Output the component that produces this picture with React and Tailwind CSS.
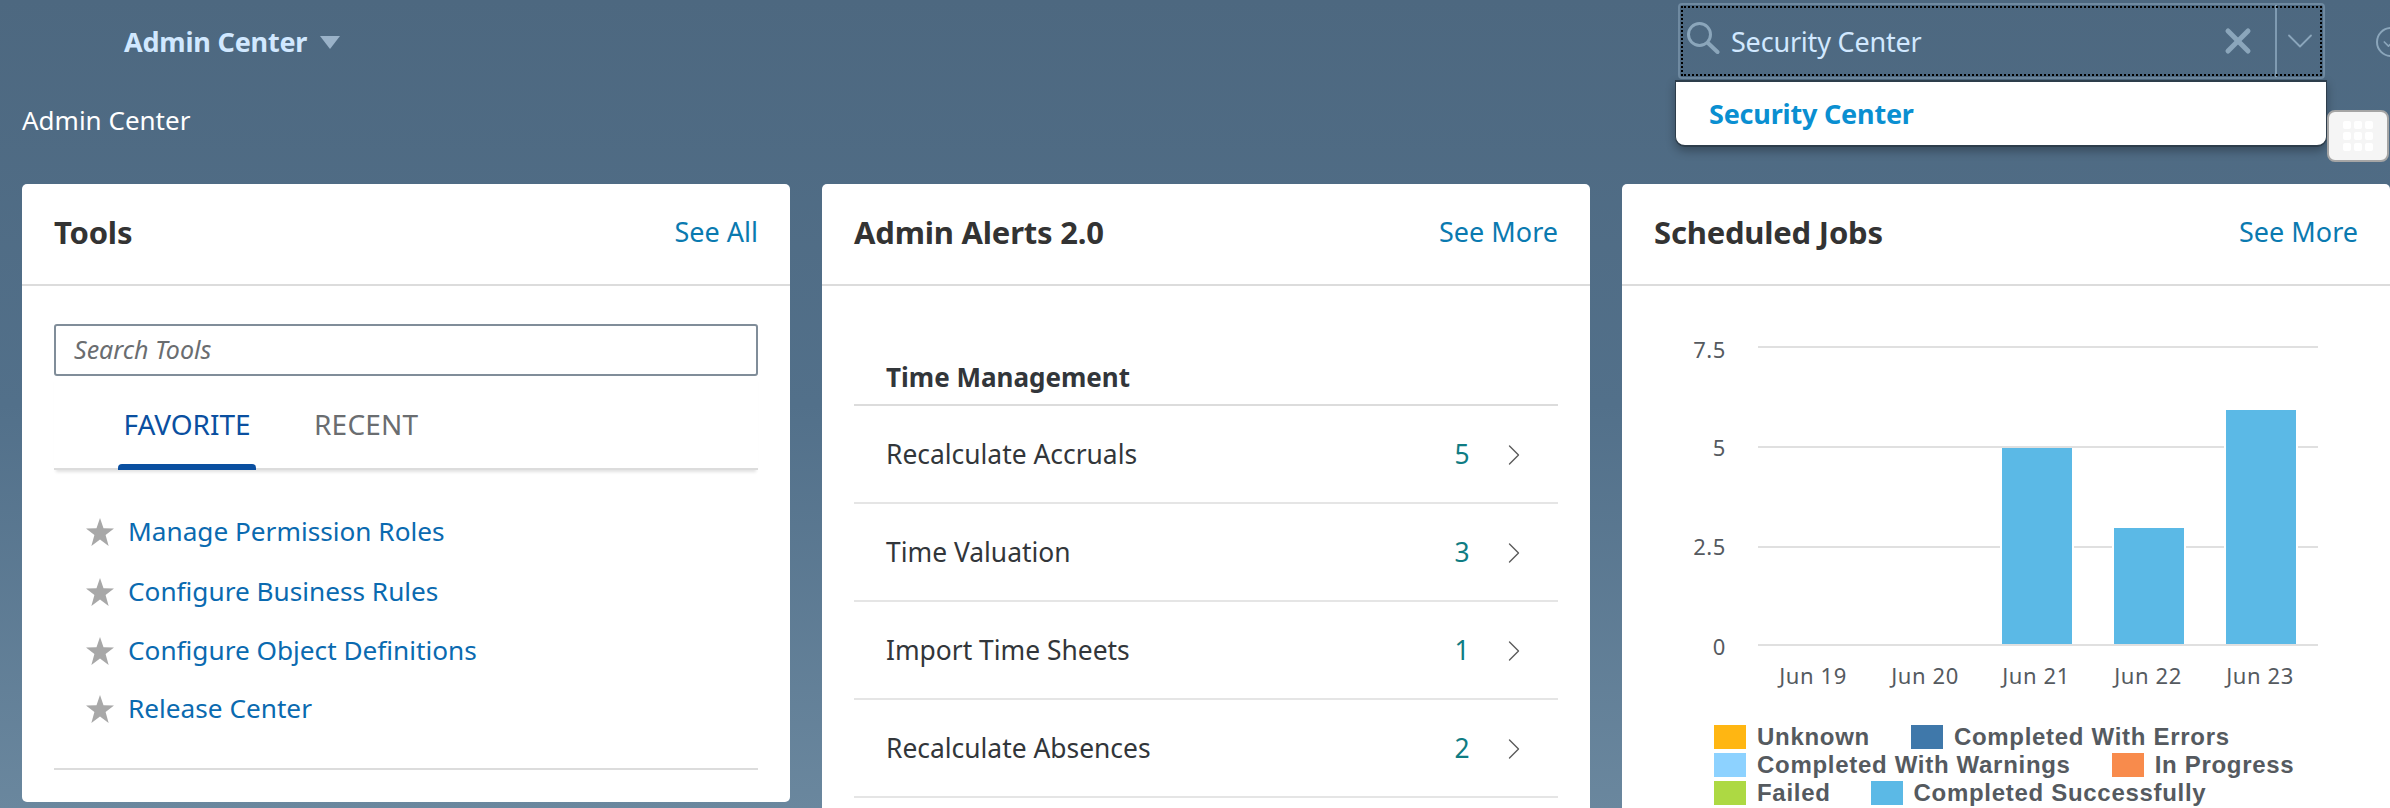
import { ChevronDown, ChevronRight, X, Check } from 'lucide-react'

const FAVORITES = ['Manage Permission Roles', 'Configure Business Rules', 'Configure Object Definitions', 'Release Center']

const ALERTS = [
  { label: 'Recalculate Accruals', count: 5 },
  { label: 'Time Valuation', count: 3 },
  { label: 'Import Time Sheets', count: 1 },
  { label: 'Recalculate Absences', count: 2 },
]

const LEGEND = [
  [
    { label: 'Unknown', color: 'bg-[#ffb612]' },
    { label: 'Completed With Errors', color: 'bg-[#3f78aa]', gap: 'ml-[41px]' },
  ],
  [
    { label: 'Completed With Warnings', color: 'bg-[#8dd2ff]' },
    { label: 'In Progress', color: 'bg-[#f88b4c]', gap: 'ml-[41px]' },
  ],
  [
    { label: 'Failed', color: 'bg-[#add943]' },
    { label: 'Completed Successfully', color: 'bg-[#5bb9e6]', gap: 'ml-[40px]' },
  ],
]

const FONT = "font-['Noto_Sans',sans-serif]"

function Card({ title, link, className = '', children }) {
  return (
    <section className={`w-[768px] shrink-0 bg-white rounded-[5px] ${className}`}>
      <header className="h-[102px] pb-[4px] flex items-center justify-between px-[32px] border-b-2 border-[#dcdcdc]">
        <h2 className="text-[31px] font-bold text-[#333333] tracking-[-0.2px]">{title}</h2>
        <a className="text-[27px] text-[#0a7ab0]">{link}</a>
      </header>
      {children}
    </section>
  )
}

function Star() {
  return (
    <svg width="28" height="28" viewBox="0 0 24 24" className="shrink-0" fill="#a8a8a8">
      <path d="M12 0l3 8.8 9 .2-7.2 5.6L19.4 24 12 18.5 4.6 24l2.6-9.4L0 9l9-.2z" />
    </svg>
  )
}

function ToolsCard() {
  return (
    <Card title="Tools" link="See All" className="h-[618px]">
      <div className="px-[32px] pt-[38px]">
        <div className="h-[52px] flex items-center border-2 border-[#808d99] rounded-[3px] pl-[18px] text-[25px] italic text-[#6a6d70]">
          Search Tools
        </div>
        <div className="h-[94px] flex items-end border-b-2 border-[#dcdcdc] shadow-[0_4px_3px_-2px_rgba(0,0,0,0.12)] pl-[64px] gap-[58px]">
          <div className="relative h-[94px] pt-[6px] w-[138px] flex items-center justify-center text-[28px] text-[#0a4fa0]">
            FAVORITE
            <span className="absolute left-0 right-0 bottom-[-2px] h-[6px] bg-[#0a4fa0] rounded-t-[4px]"></span>
          </div>
          <div className="h-[94px] pt-[6px] flex items-center text-[28px] text-[#6a6d70] tracking-[0.2px]">RECENT</div>
        </div>
        <ul className="pt-[32px] h-[300px] border-b-2 border-[#dcdcdc]">
          {FAVORITES.map((name, i) => (
            <li key={name} className={`flex items-center pl-[32px] gap-[14px] ${i < 2 ? 'h-[60px]' : 'h-[58px]'}`}>
              <Star />
              <a className="text-[26.2px] text-[#0a6ab0]">{name}</a>
            </li>
          ))}
        </ul>
      </div>
    </Card>
  )
}

function AlertsCard() {
  return (
    <Card title="Admin Alerts 2.0" link="See More" className="h-[640px]">
      <div className="px-[32px] pt-[60px]">
        <h3 className="h-[60px] pt-[4px] flex items-center pl-[32px] border-b-2 border-[#dcdcdc] text-[26px] font-bold text-[#32363a]">
          Time Management
        </h3>
        {ALERTS.map((a) => (
          <div key={a.label} className="h-[98px] pt-[2px] flex items-center border-b-2 border-[#e5e5e5] pl-[32px] text-[26.4px] text-[#32363a]">
            <span className="flex-1">{a.label}</span>
            <span className="w-[24px] text-center text-[#0f7c83] mr-[22px]">{a.count}</span>
            <ChevronRight size={36} strokeWidth={0.9} className="text-[#5a5a5a] mr-[26px]" />
          </div>
        ))}
      </div>
    </Card>
  )
}

function JobsChart() {
  const lines = [[347, 358, '7.5'], [447, 456, '5'], [547, 555, '2.5'], [645, 655, '0']]
  const bars = [[2002, 448], [2114, 528], [2226, 410]]
  const days = [[1813, 'Jun 19'], [1925, 'Jun 20'], [2036, 'Jun 21'], [2148, 'Jun 22'], [2260, 'Jun 23']]
  return (
    <svg width="768" height="410" viewBox="1622 286 768 410" className="block" style={{ fontFamily: "'Noto Sans', sans-serif" }}>
      {lines.map(([y]) => (
        <rect key={y} x="1758" y={y - 1} width="560" height="2" fill="#e0e0e0" />
      ))}
      {bars.map(([x, top]) => (
        <g key={x}>
          <rect x={x - 2} y={top} width="74" height={644 - top} fill="#fff" />
          <rect x={x} y={top} width="70" height={644 - top} fill="#5bb9e6" />
        </g>
      ))}
      {lines.map(([y, base, t]) => (
        <text key={t} x="1726" y={base} textAnchor="end" fontSize="22" fill="#555a5f" letterSpacing="0.6">{t}</text>
      ))}
      {days.map(([x, t]) => (
        <text key={t} x={x} y="684" textAnchor="middle" fontSize="22" fill="#555a5f" letterSpacing="0.6">{t}</text>
      ))}
    </svg>
  )
}

function JobsCard() {
  return (
    <Card title="Scheduled Jobs" link="See More" className="h-[640px]">
      <JobsChart />
      <div className="pl-[92px] pt-[27px] flex flex-col">
        {LEGEND.map((row, i) => (
          <div key={i} className="h-[28px] flex items-center">
            {row.map((item) => (
              <div key={item.label} className={`flex items-center ${item.gap ?? ''}`}>
                <span className={`w-[32px] h-[24px] ${item.color}`}></span>
                <span className="ml-[11px] font-['Liberation_Sans',sans-serif] text-[24px] font-bold text-[#555a5f] tracking-[0.7px] leading-[28px] whitespace-nowrap">{item.label}</span>
              </div>
            ))}
          </div>
        ))}
      </div>
    </Card>
  )
}

function GlobalSearch() {
  return (
    <div className="relative w-[647px] h-[76px] mt-[3px] flex items-center border-2 border-[#6f8aa1] rounded-[4px]">
      {/* focus ring */}
      <div className="absolute inset-[1px] border-[2px] border-dotted border-black pointer-events-none"></div>
      <svg width="33" height="32" viewBox="0 0 33 32" fill="none" stroke="#8ba6bb" className="ml-[7px] mt-[-6px] shrink-0">
        <circle cx="12.5" cy="12.5" r="11" strokeWidth="3" />
        <path d="M21 21l9.5 9" strokeWidth="4" strokeLinecap="round" />
      </svg>
      <span className="ml-[11px] pt-[2px] flex-1 text-[27px] text-[#d1e8ff] tracking-[-0.2px]">Security Center</span>
      <X size={40} strokeWidth={3} className="text-[#8ba6bb] mr-[17px]" />
      <div className="w-[48px] h-full flex items-center justify-center border-l-2 border-[#7f9bb2]">
        <ChevronDown size={44} strokeWidth={1} className="text-[#8ba6bb]" />
      </div>
    </div>
  )
}

export default function App() {
  return (
    <div className={`relative w-[2390px] h-[808px] overflow-hidden bg-linear-to-b from-[#4d6880] via-[#52708a] to-[#6a879e] ${FONT}`}>
      <div className="h-[84px] flex items-start">
        <div className="ml-[124px] h-[84px] flex items-center gap-[13px]">
          <span className="text-[27px] font-bold text-[#d1e8ff] tracking-[-0.2px] whitespace-nowrap">Admin Center</span>
          <span className="w-0 h-0 border-x-[10px] border-x-transparent border-t-[13px] border-t-[#9ab2c8]"></span>
        </div>
        <div className="ml-auto">
          <GlobalSearch />
        </div>
        <div className="ml-[51px] mr-[-16px] mt-[27px] w-[30px] h-[30px] shrink-0 rounded-full border-2 border-[#8ba6bb] flex items-center justify-center">
          <Check size={20} strokeWidth={2} className="text-[#8ba6bb]" />
        </div>
      </div>

      <h1 className="h-[72px] flex items-center pl-[22px] text-[26px] text-white whitespace-nowrap">Admin Center</h1>

      <main className="mt-[28px] pl-[22px] flex items-start gap-[32px]">
        <ToolsCard />
        <AlertsCard />
        <JobsCard />
      </main>

      {/* search suggestions popup */}
      <div className="absolute left-[1675px] top-[80px] w-[652px] h-[67px] pt-[1px] flex items-center pl-[33px] bg-white border border-y-2 border-[#2d3d4b] rounded-b-[10px] shadow-[0_4px_10px_rgba(0,0,0,0.3)] text-[27px] font-bold text-[#0a8fd1] tracking-[-0.2px]">
        Security Center
      </div>

      {/* side grid button */}
      <div className="absolute left-[2327px] top-[110px] w-[62px] h-[52px] flex items-center justify-center rounded-[8px] border-2 border-[#a5a5a5] bg-[#f5f5f5]">
        <div className="grid grid-cols-3 gap-[3px]">
          {Array.from({ length: 9 }).map((_, i) => (
            <span key={i} className="w-[8px] h-[8px] rounded-[2px] bg-white"></span>
          ))}
        </div>
      </div>
    </div>
  )
}
